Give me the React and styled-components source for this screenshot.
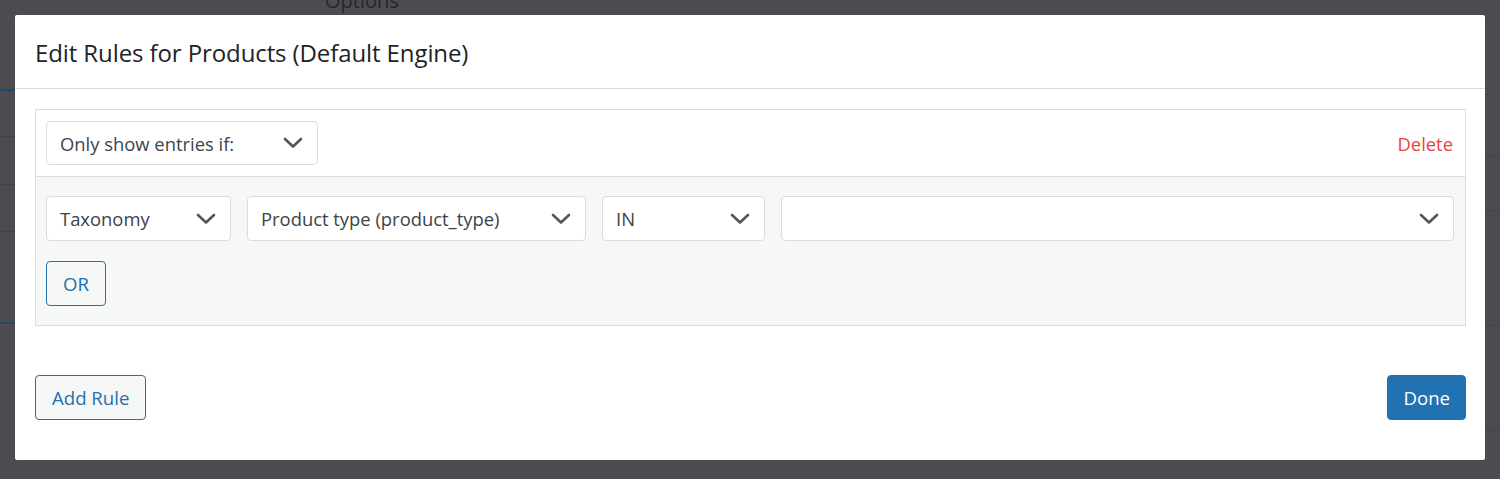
import React from "react";
import styled, { createGlobalStyle } from "styled-components";

const GlobalStyle = createGlobalStyle`
  html, body { margin: 0; padding: 0; }
  body {
    background: #4c4c51;
    font-family: "Open Sans", "Noto Sans", sans-serif;
  }
  * { box-sizing: border-box; }
`;

const Page = styled.div`
  position: relative;
  width: 1500px;
  height: 479px;
  overflow: hidden;
  background: #4b4b50;
`;

const Behind = styled.div`
  display: flex;
  flex-direction: column;
  padding-left: 325px;
  height: 100%;
`;

const BehindTitle = styled.div`
  font-size: 20px;
  color: #26262a;
  line-height: 20px;
  margin-top: -9px;
`;

const SideLine = styled.div`
  position: absolute;
  left: ${(p) => (p.$right ? "1485px" : "0")};
  width: 15px;
  top: ${(p) => p.$top}px;
  height: ${(p) => (p.$blue ? 2 : 1)}px;
  background: ${(p) => (p.$blue ? "#1d4a6b" : "#444448")};
`;

const Modal = styled.div`
  position: absolute;
  left: 15px;
  top: 15px;
  width: 1470px;
  height: 445px;
  background: #fff;
  border-radius: 2px;
  display: flex;
  flex-direction: column;
`;

const Header = styled.div`
  height: 74px;
  padding: 0 20px;
  display: flex;
  align-items: center;
  border-bottom: 1px solid #dcdcde;
`;

const Title = styled.h1`
  margin: 0 0 -2px;
  font-size: 24px;
  font-weight: 400;
  color: #1d2327;
  letter-spacing: -0.1px;
`;

const Body = styled.div`
  padding: 20px 19px 0 20px;
`;

const Group = styled.div`
  border: 1px solid #dcdcde;
`;

const GroupTop = styled.div`
  display: flex;
  align-items: center;
  justify-content: space-between;
  padding: 11px 12px 11px 10px;
  border-bottom: 1px solid #dcdcde;
  background: #fff;
`;

const GroupBottom = styled.div`
  background: #f6f7f7;
  padding: 19px 11px 19px 10px;
  display: flex;
  flex-direction: column;
  align-items: flex-start;
  gap: 20px;
`;

const ConditionRow = styled.div`
  display: flex;
  gap: 16px;
  width: 100%;
`;

const SelectBox = styled.div`
  display: flex;
  align-items: center;
  justify-content: space-between;
  height: ${(p) => p.$h || 45}px;
  width: ${(p) => (p.$w ? `${p.$w}px` : "auto")};
  flex: ${(p) => (p.$grow ? "1" : "none")};
  padding: 0 14px 0 13px;
  background: #fff;
  border: 1px solid #dcdcde;
  border-radius: 4px;
  font-size: 18.4px;
  color: #3c434a;
`;

const Chevron = () => (
  <svg width="20" height="12" viewBox="0 0 20 12" aria-hidden="true">
    <path d="M2 2 L10 9.5 L18 2" fill="none" stroke="#50575e" strokeWidth="2.6" strokeLinecap="round" strokeLinejoin="round" />
  </svg>
);

const DeleteLink = styled.a`
  color: #ef3e42;
  font-size: 18.4px;
  cursor: pointer;
`;

const Button = styled.button`
  height: 45px;
  padding: 0 ${(p) => p.$px || 16}px;
  border-radius: 4px;
  font-family: inherit;
  font-size: 18.6px;
  cursor: pointer;
  border: 1px solid #2271b1;
  background: ${(p) => (p.$primary ? "#2271b1" : "#f6f7f7")};
  color: ${(p) => (p.$primary ? "#fff" : "#2271b1")};
`;

const Footer = styled.div`
  display: flex;
  justify-content: space-between;
  padding: 49px 19px 0 20px;
`;

const Select = ({ children, ...rest }) => (
  <SelectBox {...rest}>
    <span>{children}</span>
    <Chevron />
  </SelectBox>
);

export default function App() {
  return (
    <Page>
      <GlobalStyle />
      <Behind>
        <BehindTitle>Options</BehindTitle>
      </Behind>
      <SideLine $top={89} $blue />
      <SideLine $top={136} />
      <SideLine $top={184} />
      <SideLine $top={231} />
      <SideLine $top={322} $blue />
      <SideLine $top={155} $right />
      <SideLine $top={210} $right />
      <SideLine $top={325} $right />
      <SideLine $top={430} $right />
      <Modal>
        <Header>
          <Title>Edit Rules for Products (Default Engine)</Title>
        </Header>
        <Body>
          <Group>
            <GroupTop>
              <Select $w={272} $h={44}>Only show entries if:</Select>
              <DeleteLink>Delete</DeleteLink>
            </GroupTop>
            <GroupBottom>
              <ConditionRow>
                <Select $w={185}>Taxonomy</Select>
                <Select $w={339}>Product type (product_type)</Select>
                <Select $w={163}>IN</Select>
                <Select $grow>{""}</Select>
              </ConditionRow>
              <Button>OR</Button>
            </GroupBottom>
          </Group>
        </Body>
        <Footer>
          <Button>Add Rule</Button>
          <Button $primary $px={15}>Done</Button>
        </Footer>
      </Modal>
    </Page>
  );
}
